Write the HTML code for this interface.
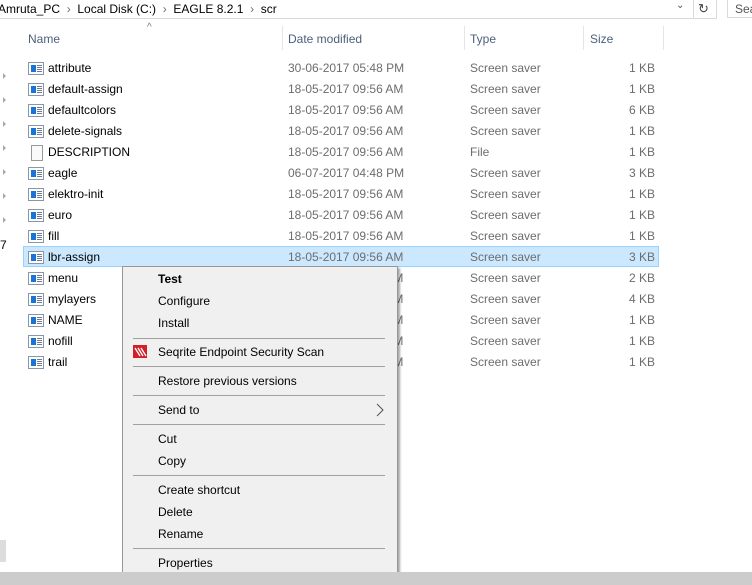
<!DOCTYPE html>
<html><head><style>
*{margin:0;padding:0;box-sizing:border-box}
body{width:752px;height:585px;overflow:hidden;background:#fff;font-family:"Liberation Sans",sans-serif;font-size:12px;color:#000;position:relative}
.a{position:absolute;white-space:nowrap}
.g{color:#6d6d6d}
.sep{position:absolute;width:1px;background:#e5e5e5;top:26px;height:24px}
.ic{position:absolute;left:28px;width:16px;height:13px;border:1px solid #8a96a8;background:#fff}
.ic:before{content:"";position:absolute;left:2px;top:2px;width:5px;height:7px;background:#1a73d6}
.ic:after{content:"";position:absolute;left:8px;top:2px;width:5px;height:7px;background:repeating-linear-gradient(#6a7a90 0 1px,transparent 1px 2px)}
.m{position:absolute;left:158px;font-size:12px}
.ms{position:absolute;left:133px;width:252px;height:1px;background:#a0a0a0}
.ar{position:absolute;left:3px;width:0;height:0;border-left:3px solid #aaa;border-top:3px solid transparent;border-bottom:3px solid transparent}
</style></head><body>
<div class="a" style="left:-2px;top:2px;font-size:12px">Amruta_PC&nbsp;&nbsp;<span class="g">›</span>&nbsp;&nbsp;Local Disk (C:)&nbsp;&nbsp;<span class="g">›</span>&nbsp;&nbsp;EAGLE 8.2.1&nbsp;&nbsp;<span class="g">›</span>&nbsp;&nbsp;scr</div>
<div class="a" style="left:0;top:18px;width:717px;height:1px;background:#d9d9d9"></div>
<div class="a" style="left:676px;top:0;font-size:10px;color:#555">⌄</div>
<div class="a" style="left:693px;top:0;width:1px;height:18px;background:#d9d9d9"></div>
<div class="a" style="left:698px;top:1px;font-size:13px;color:#444">↻</div>
<div class="a" style="left:716px;top:0;width:1px;height:18px;background:#d9d9d9"></div>
<div class="a" style="left:727px;top:0;width:30px;height:18px;border:1px solid #d9d9d9;border-top:none"></div>
<div class="a" style="left:735px;top:2px;color:#555">Sea</div>
<div class="a" style="left:0;top:540px;width:6px;height:22px;background:#ddd"></div>
<div class="a" style="left:0;top:238px;font-size:12px">7</div>
<div class="ar" style="top:73px"></div><div class="ar" style="top:97px"></div><div class="ar" style="top:121px"></div><div class="ar" style="top:145px"></div><div class="ar" style="top:169px"></div><div class="ar" style="top:193px"></div><div class="ar" style="top:217px"></div>
<div class="a" style="left:147px;top:22px;font-size:10px;color:#777">^</div>
<div class="a" style="left:28px;top:32px;color:#4c607a">Name</div>
<div class="a" style="left:288px;top:32px;color:#4c607a">Date modified</div>
<div class="a" style="left:470px;top:32px;color:#4c607a">Type</div>
<div class="a" style="left:590px;top:32px;color:#4c607a">Size</div>
<div class="sep" style="left:282px"></div><div class="sep" style="left:464px"></div><div class="sep" style="left:583px"></div><div class="sep" style="left:663px"></div>
<div class="a" style="left:23px;top:246px;width:636px;height:21px;background:#cce8ff;border:1px solid #99d1ff"></div>
<div id="rows"></div>
<script>
var r=[["attribute","30-06-2017 05:48 PM","Screen saver","1 KB"],["default-assign","18-05-2017 09:56 AM","Screen saver","1 KB"],["defaultcolors","18-05-2017 09:56 AM","Screen saver","6 KB"],["delete-signals","18-05-2017 09:56 AM","Screen saver","1 KB"],["DESCRIPTION","18-05-2017 09:56 AM","File","1 KB"],["eagle","06-07-2017 04:48 PM","Screen saver","3 KB"],["elektro-init","18-05-2017 09:56 AM","Screen saver","1 KB"],["euro","18-05-2017 09:56 AM","Screen saver","1 KB"],["fill","18-05-2017 09:56 AM","Screen saver","1 KB"],["lbr-assign","18-05-2017 09:56 AM","Screen saver","3 KB"],["menu","18-05-2017 09:56 AM","Screen saver","2 KB"],["mylayers","18-05-2017 09:56 AM","Screen saver","4 KB"],["NAME","18-05-2017 09:56 AM","Screen saver","1 KB"],["nofill","18-05-2017 09:56 AM","Screen saver","1 KB"],["trail","18-05-2017 09:56 AM","Screen saver","1 KB"]];
var h="";
for(var i=0;i<r.length;i++){var t=58+21*i;
h+=(r[i][0]=="DESCRIPTION"?'<div class="a" style="left:31px;top:'+(t+3)+'px;width:12px;height:16px;border:1px solid #999;background:#fafafa"></div>':'<div class="ic" style="top:'+(t+4)+'px"></div>');
h+='<div class="a" style="left:48px;top:'+(t+3)+'px">'+r[i][0]+'</div>';
h+='<div class="a g" style="left:288px;top:'+(t+3)+'px">'+r[i][1]+'</div>';
h+='<div class="a g" style="left:470px;top:'+(t+3)+'px">'+r[i][2]+'</div>';
h+='<div class="a g" style="right:97px;top:'+(t+3)+'px">'+r[i][3]+'</div>';}
document.getElementById("rows").innerHTML=h;
</script>
<div class="a" style="left:122px;top:266px;width:276px;height:310px;background:#f0f0f0;border:1px solid #979797;box-shadow:2px 2px 2px rgba(0,0,0,.35)"></div>
<div class="m" style="top:272px;font-weight:bold">Test</div>
<div class="m" style="top:294px">Configure</div>
<div class="m" style="top:316px">Install</div>
<div class="ms" style="top:338px"></div>
<div class="a" style="left:133px;top:345px;width:14px;height:13px;background:#d0202a"><svg width="14" height="13"><path d="M2 3L7 11M5 3L10 11M8 3L13 11" stroke="#fff" stroke-width="1.3" fill="none"/></svg></div>
<div class="m" style="top:345px">Seqrite Endpoint Security Scan</div>
<div class="ms" style="top:366px"></div>
<div class="m" style="top:374px">Restore previous versions</div>
<div class="ms" style="top:395px"></div>
<div class="m" style="top:403px">Send to</div>
<svg class="a" style="left:375px;top:403px" width="10" height="14"><path d="M2 1L8 7L2 13" stroke="#555" fill="none"/></svg>
<div class="ms" style="top:424px"></div>
<div class="m" style="top:432px">Cut</div>
<div class="m" style="top:454px">Copy</div>
<div class="ms" style="top:475px"></div>
<div class="m" style="top:483px">Create shortcut</div>
<div class="m" style="top:505px">Delete</div>
<div class="m" style="top:527px">Rename</div>
<div class="ms" style="top:548px"></div>
<div class="m" style="top:556px">Properties</div>
<div class="a" style="left:0;top:572px;width:752px;height:13px;background:#cccccc"></div>
</body></html>
